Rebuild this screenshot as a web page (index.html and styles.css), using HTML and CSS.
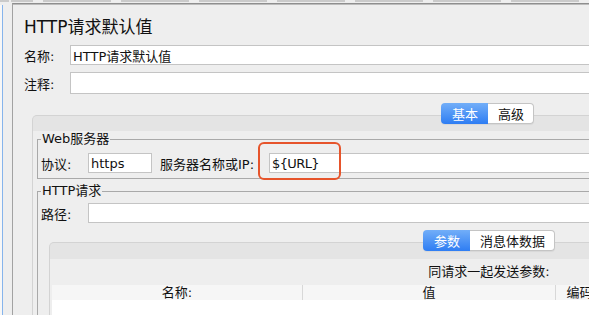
FILE: index.html
```html
<!DOCTYPE html>
<html lang="zh-CN">
<head>
  <meta charset="UTF-8">
  <meta name="viewport" content="width=device-width, initial-scale=1.0">
  <title>HTTP请求默认值</title>
  <link rel="stylesheet" href="styles.css">
</head>
<body>
  <!-- 顶部工具栏的底边 -->
  <div class="tabstrip">
    <span></span><span></span><span></span><span></span><span></span>
    <span></span><span></span><span></span><span></span>
  </div>

  <div class="main">
    <div class="tree"></div>

    <div class="editor">
      <div class="editor-body">
        <h1 class="title">HTTP请求默认值</h1>

        <div class="field">
          <label class="field-label" for="name">名称:</label>
          <input type="text" id="name" value="HTTP请求默认值">
        </div>
        <div class="field tall">
          <label class="field-label" for="comment">注释:</label>
          <input type="text" id="comment">
        </div>

        <div class="seg-row">
          <div class="seg">
            <span class="on">基本</span>
            <span class="off">高级</span>
          </div>
        </div>

        <div class="pane">
          <fieldset class="group web">
            <legend>Web服务器</legend>
            <div class="inline-row">
              <label class="lbl-proto" for="proto">协议:</label>
              <input type="text" id="proto" class="proto" value="https">
              <label class="lbl-host" for="host">服务器名称或IP:</label>
              <span class="host-wrap">
                <input type="text" id="host" class="host" value="${URL}">
                <span class="mark"></span>
              </span>
            </div>
          </fieldset>

          <fieldset class="group http">
            <legend>HTTP请求</legend>
            <div class="inline-row path-row">
              <label class="lbl-proto" for="path">路径:</label>
              <input type="text" id="path">
            </div>

            <div class="seg-row inner">
              <div class="seg">
                <span class="on">参数</span>
                <span class="off">消息体数据</span>
              </div>
            </div>

            <div class="pane inner-pane">
              <div class="caption">同请求一起发送参数:</div>
              <table class="args">
                <thead>
                  <tr>
                    <th class="c-name">名称:</th>
                    <th class="c-value">值</th>
                    <th class="c-enc">编码?</th>
                    <th class="c-type">内容类型</th>
                    <th>包含等于?</th>
                  </tr>
                </thead>
                <tbody>
                  <tr><td colspan="5"></td></tr>
                </tbody>
              </table>
            </div>
          </fieldset>
        </div>
      </div>
    </div>
  </div>
</body>
</html>
```

FILE: styles.css
```css
/* 整体：macOS 下 JMeter 的浅灰界面 */
html, body {
  overflow: hidden;
}
body {
  margin: 0;
  width: 589px;
  height: 315px;
  background-color: #eeeeee;
  font-family: "DejaVu Sans", "Noto Sans CJK SC", sans-serif;
  font-size: 13px;
  color: #111;
}

.tabstrip {
  display: flex;
  height: 3px;
}
.tabstrip span {
  flex: none;
  width: 68px;
  height: 2px;
  margin-right: 10px;
  background-color: #cacaca;
}
.tabstrip span:first-child {
  width: 9px;
  margin-right: 2px;
}
.tabstrip span:nth-child(2) {
  width: 22px;
}

.main {
  display: flex;
  height: 312px;
}
.tree {
  flex: none;
  width: 12px;
  margin-top: 2px;
  background: linear-gradient(to right, #f7f7f7 0 2px, #86b4ec 2px 3px, #eeeeee 3px);
}
.editor {
  flex: none;
  width: 936px;
  border-top: 1px solid #8e8e8e;
  border-left: 1px solid #a2a2a2;
}
.editor-body {
  border-top: 1px solid #bcbcbc;
  padding-left: 11px;
}

.title {
  margin: 12px 0 0;
  font-size: 17px;
  line-height: 20px;
  font-weight: normal;
}

.field {
  display: flex;
  align-items: center;
  height: 20px;
  margin-top: 8px;
}
.field.tall {
  height: 22px;
  margin-top: 7px;
}
.field-label {
  flex: none;
  width: 46px;
}

input[type="text"] {
  box-sizing: border-box;
  height: 100%;
  margin: 0;
  padding: 0 2px;
  border: 1px solid #c4c4c4;
  background-color: #fff;
  font: inherit;
  color: #111;
  outline: none;
}
.field input {
  flex: 1;
  min-width: 0;
}

/* 分段按钮 */
.seg-row {
  position: relative;
  z-index: 1;
  display: flex;
  justify-content: center;
  width: 911px;
  height: 21px;
  margin: 9px 0 0 8px;
}
.seg {
  display: flex;
  height: 21px;
  border-radius: 4px;
  box-shadow: 0 1px 1px rgba(0,0,0,0.06);
}
.seg span {
  display: flex;
  align-items: center;
  box-sizing: border-box;
}
.seg .on {
  padding: 0 10px 0 11px;
  border-radius: 4px 0 0 4px;
  background: linear-gradient(#72aef8, #2e7df3);
  color: #fff;
}
.seg .off {
  padding: 0 9px 0 10px;
  border: 1px solid #c4c4c4;
  border-left: none;
  border-radius: 0 4px 4px 0;
  background-color: #fff;
}

.pane {
  box-sizing: border-box;
  width: 911px;
  margin: -9px 0 0 8px;
  padding: 0 4px;
  border: 1px solid #d3d3d3;
  border-bottom: none;
  border-radius: 5px 5px 0 0;
  background: linear-gradient(#e4e4e4 0 15px, #eeeeee 15px);
}

fieldset.group {
  min-width: 0;
  margin: 16px 0 0;
  padding: 0 3px 5px;
  border: 1px solid #a9a9a9;
}
fieldset.http {
  margin-top: 5px;
  padding-bottom: 0;
  border-bottom: none;
}
legend {
  padding: 0 1px;
  line-height: 14px;
}

.inline-row {
  display: flex;
  align-items: center;
  height: 20px;
  margin-top: 7px;
}
.path-row {
  margin-top: 5px;
}
.path-row input {
  flex: 1;
  min-width: 0;
}
.lbl-proto {
  flex: none;
  width: 47px;
}
.proto {
  flex: none;
  width: 64px;
}
.lbl-host {
  flex: none;
  width: 109px;
  margin-left: 8px;
}
.host-wrap {
  position: relative;
  display: flex;
  flex: 1;
  height: 100%;
  margin-right: 8px;
}
.host-wrap input {
  flex: 1;
  min-width: 0;
}
.host-wrap .host {
  letter-spacing: -0.6px;
}
/* 截图上的橙色标注框 */
.mark {
  position: absolute;
  left: -11px;
  top: -11px;
  box-sizing: border-box;
  width: 83px;
  height: 38px;
  border: 2px solid #e6542b;
  border-radius: 6px;
  pointer-events: none;
}

.seg-row.inner {
  width: 880px;
  margin: 7px 0 0 8px;
}
.inner-pane {
  width: 880px;
  margin: -9px 0 0 8px;
  padding: 16px 2px 0 2px;
  background: linear-gradient(#e4e4e4 0 16px, #eeeeee 16px);
}
.caption {
  height: 26px;
  line-height: 26px;
  text-align: center;
}

.args {
  width: 100%;
  border-collapse: collapse;
  table-layout: fixed;
}
.args th {
  height: 15px;
  padding: 0;
  border-right: 1px solid #d8d8d8;
  background-color: #f6f6f6;
  font-weight: normal;
  font-size: 13px;
  line-height: 15px;
}
.args .c-name {
  width: 250px;
}
.args .c-value {
  width: 252px;
}
.args .c-enc {
  width: 54px;
}
.args .c-type {
  width: 150px;
}
.args td {
  height: 60px;
  background-color: #fff;
}
```
